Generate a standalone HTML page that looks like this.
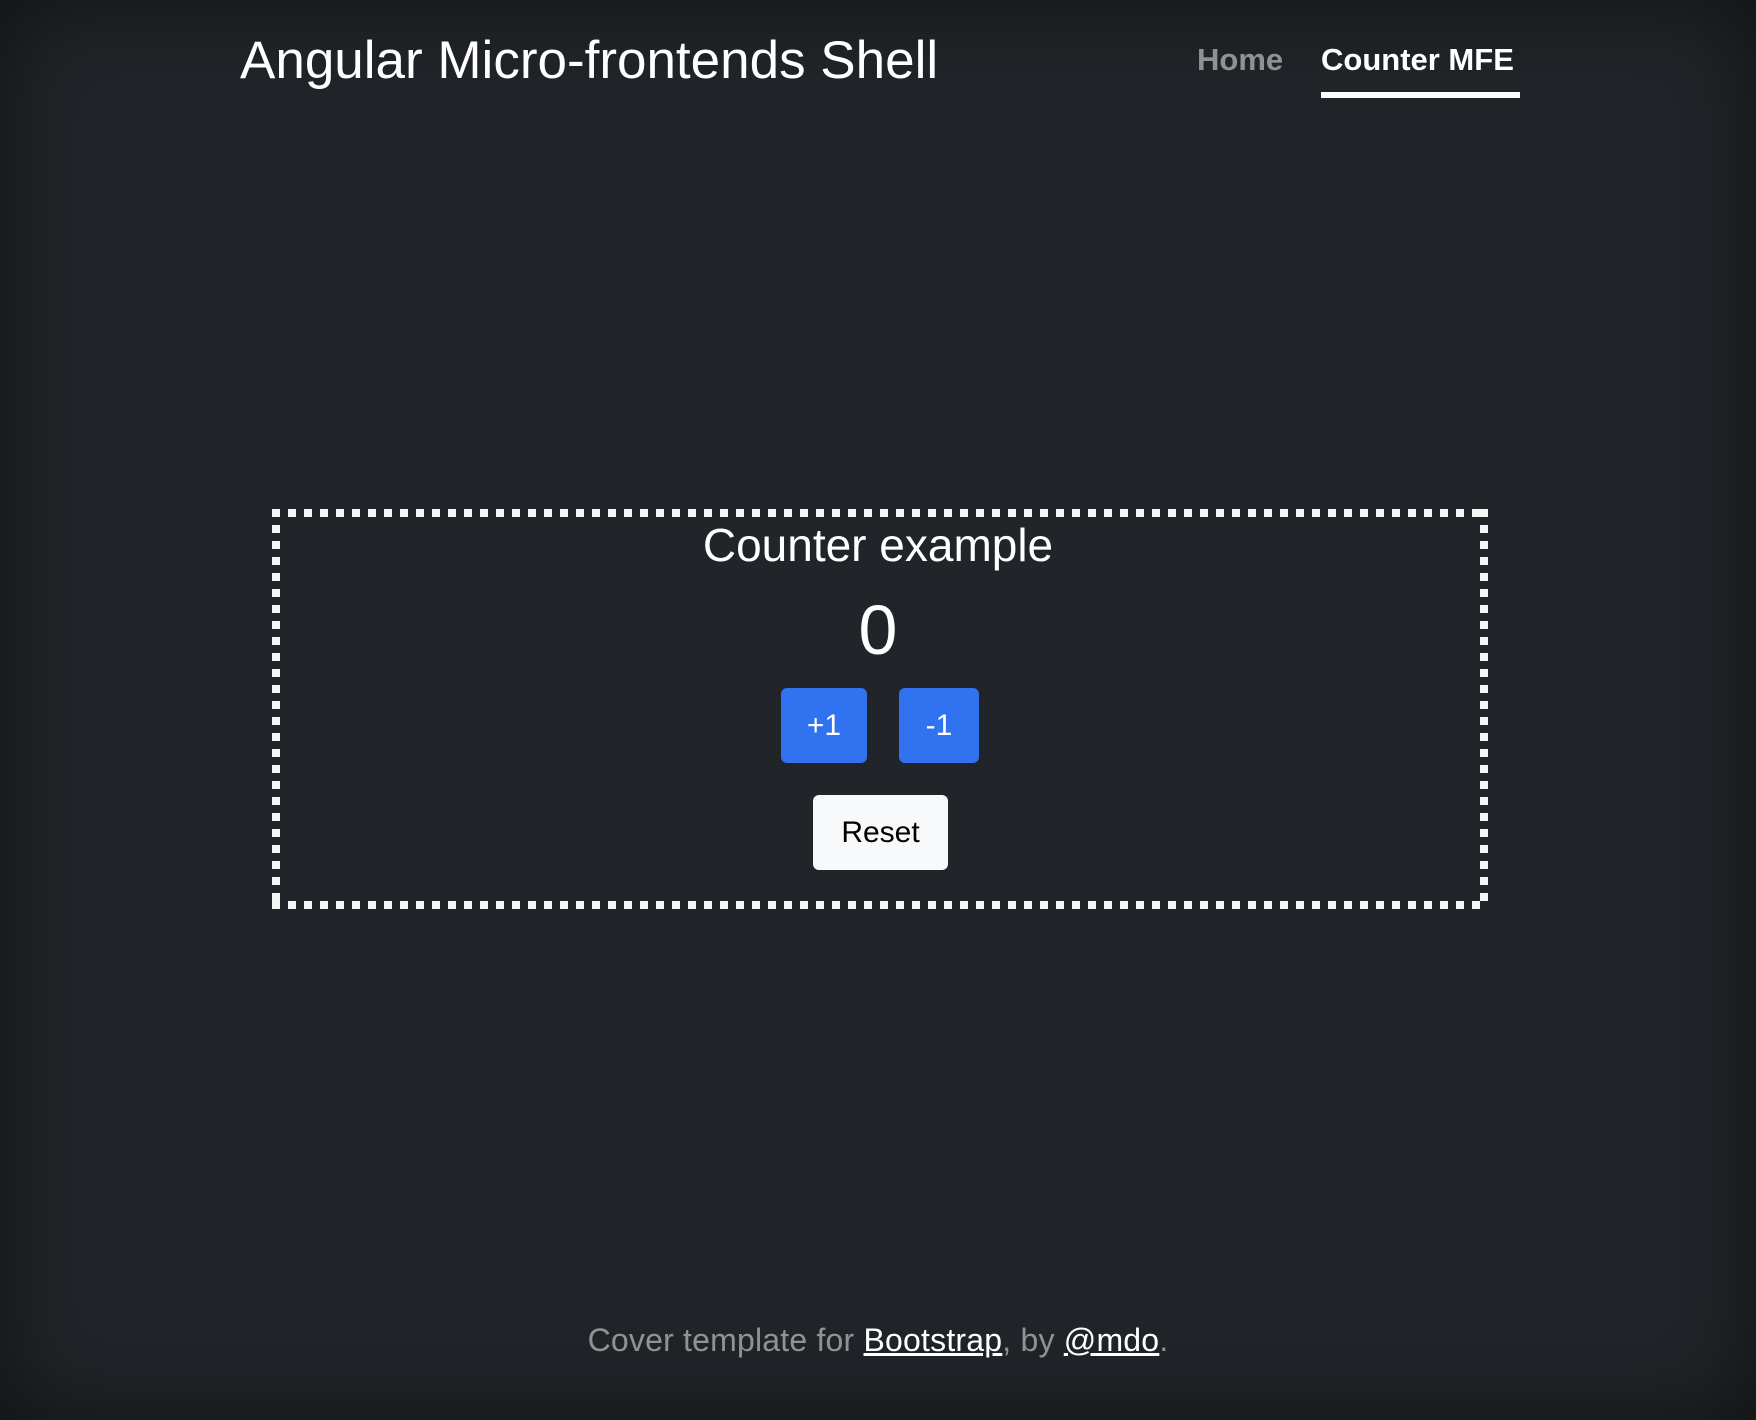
<!DOCTYPE html>
<html><head><meta charset="utf-8"><style>
html,body{margin:0;padding:0}
body{width:1756px;height:1420px;background:#212529;color:#fff;font-family:"Liberation Sans",sans-serif;position:relative;overflow:hidden;box-shadow:inset 0 0 100px rgba(0,0,0,.5)}
.a{position:absolute;white-space:nowrap}
.title{left:240px;top:26px;font-size:53px;line-height:70px}
.nav{font-weight:bold;font-size:31px;line-height:40px;top:40px}
.home{left:1197px;color:rgba(255,255,255,.5)}
.cmfe{left:1321px;width:199px;border-bottom:6px solid #fff;padding-bottom:12px}
.s{position:absolute}
.hz{height:8px;background:repeating-linear-gradient(90deg,#f5f5f5 0 8px,transparent 8px 16px)}
.vt{width:8px;background:repeating-linear-gradient(180deg,#f5f5f5 0 8px,transparent 8px 16px)}
.h{left:0;width:1756px;text-align:center}
.btn{position:absolute;border-radius:6px;font-size:30px;text-align:center;line-height:75px}
.foot{top:1320px;font-size:32px;letter-spacing:0.2px;line-height:40px;color:rgba(255,255,255,.5)}
.foot u{color:#fff}
</style></head><body>
<div class="a title">Angular Micro-frontends Shell</div>
<div class="a nav home">Home</div>
<div class="a nav cmfe">Counter MFE</div>
<div class="s hz" style="left:272px;top:509px;width:1216px"></div>
<div class="s hz" style="left:272px;top:901px;width:1216px"></div>
<div class="s vt" style="left:272px;top:509px;height:400px"></div>
<div class="s vt" style="left:1480px;top:509px;height:400px"></div>
<div class="a h" style="top:517px;font-size:46px;line-height:56px">Counter example</div>
<div class="a h" style="top:590px;font-size:70px;line-height:80px">0</div>
<div class="btn" style="left:781px;top:688px;width:86px;background:#3072f0">+1</div>
<div class="btn" style="left:899px;top:688px;width:80px;background:#3072f0">-1</div>
<div class="btn" style="left:813px;top:795px;width:135px;background:#f8f9fa;color:#000">Reset</div>
<div class="a h foot">Cover template for <u>Bootstrap</u>, by <u>@mdo</u>.</div>
</body></html>
